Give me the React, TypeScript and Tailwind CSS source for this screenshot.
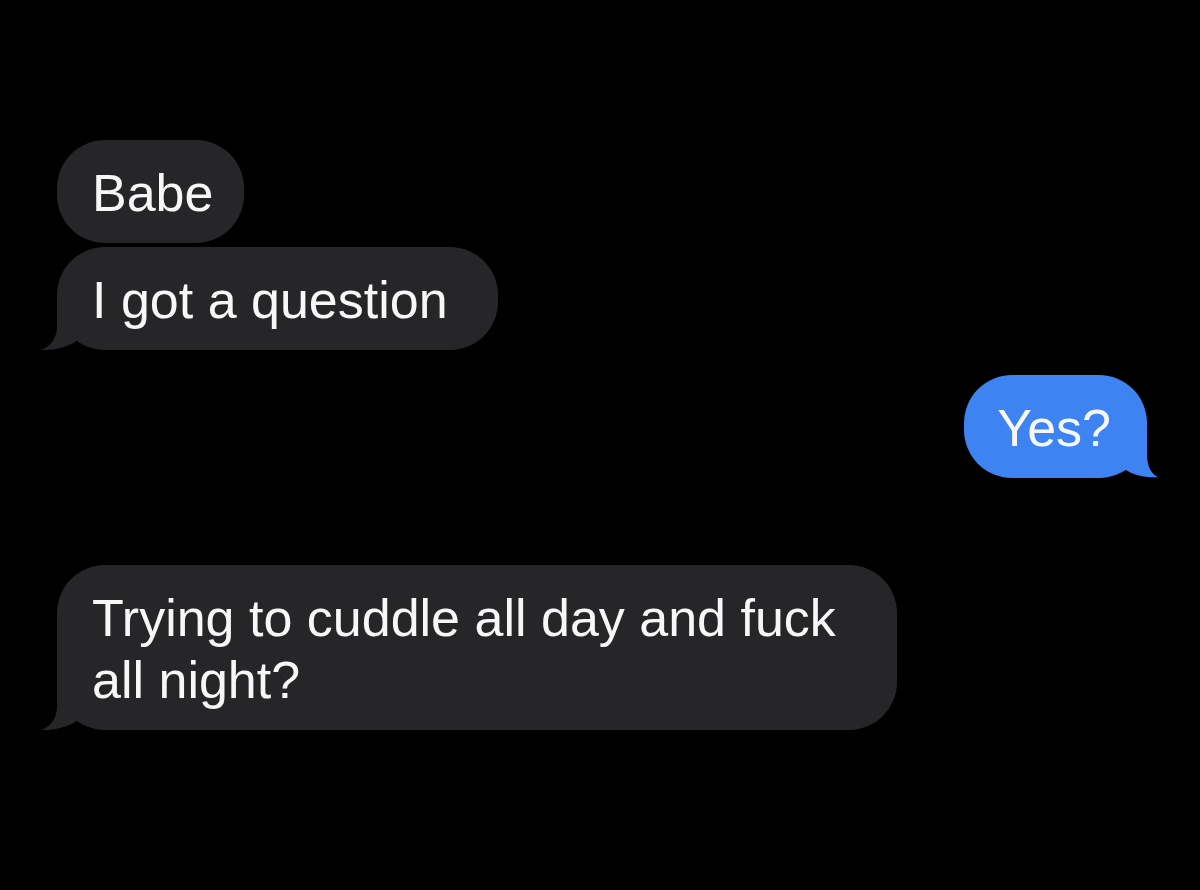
const GRAY = '#262629';
const BLUE = '#3d84f2';

type Side = 'in' | 'out';

// tail hangs off the bottom corner, the straight part covers the rounded edge
const Tail = ({ side, color }: { side: Side; color: string }) =>
    side === 'in' ? (
        <svg
            className="absolute bottom-0 left-[-16px]"
            width="40"
            height="50"
            viewBox="0 0 40 50"
        >
            <path
                d="M16 0 L16 26 C16 39 9 47 0 50 C11 50.5 25 48 36 41 L36 0 Z"
                fill={color}
            />
        </svg>
    ) : (
        <svg
            className="absolute bottom-0 right-[-11px]"
            width="35"
            height="50"
            viewBox="0 0 35 50"
        >
            <path
                d="M24 0 L24 26 C24 38 28 46 35 49 C25 50 12 48 3 42 L3 0 Z"
                fill={color}
            />
        </svg>
    );

const Bubble = ({
    text,
    side,
    tail,
    className = 'pl-[35px] pr-[38px]',
}: {
    text: string;
    side: Side;
    tail?: boolean;
    className?: string;
}) => {
    const color = side === 'in' ? GRAY : BLUE;
    return (
        <div
            className={`relative rounded-[48px] pt-[22px] pb-[19px] text-[52px] leading-[62px] text-[#f7f7f7] ${className}`}
            style={{ backgroundColor: color }}
        >
            {text}
            {tail && <Tail side={side} color={color} />}
        </div>
    );
};

export default function App() {
    return (
        <div
            className="min-h-[890px] w-full bg-black pt-[140px] pl-[57px] pr-[53px]"
            style={{ fontFamily: '"Liberation Sans", Arial, sans-serif' }}
        >
            <div className="flex flex-col items-start gap-[4px]">
                <Bubble text="Babe" side="in" className="pl-[35px] pr-[31px]" />
                <Bubble text="I got a question" side="in" tail className="pl-[35px] pr-[50px]" />
            </div>
            <div className="mt-[25px] flex justify-end">
                <Bubble text="Yes?" side="out" tail className="pl-[33px] pr-[36px]" />
            </div>
            <div className="mt-[87px] flex">
                <Bubble
                    text="Trying to cuddle all day and fuck all night?"
                    side="in"
                    tail
                    className="w-[840px] pl-[35px] pr-[38px]"
                />
            </div>
        </div>
    );
}
